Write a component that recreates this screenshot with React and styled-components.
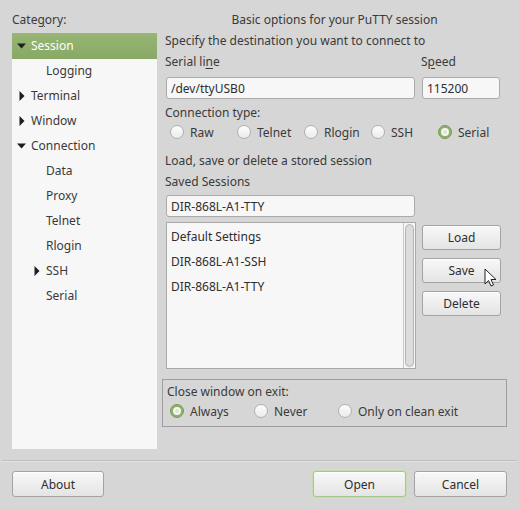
import React, { useState } from 'react';
import styled, { createGlobalStyle, css } from 'styled-components';

const GlobalStyle = createGlobalStyle`
  html, body {
    margin: 0;
    padding: 0;
    background: #d6d6d6;
  }
  body {
    font-family: "Noto Sans", "Open Sans", sans-serif;
    font-size: 12px;
    color: #3a3a3a;
  }
`;

const Window = styled.div`
  width: 519px;
  height: 510px;
  display: flex;
  flex-direction: column;
  background: #d6d6d6;
  overflow: hidden;
`;

const Main = styled.div`
  display: flex;
  padding: 12px 12px 0 12px;
  gap: 5px;
`;

const LeftCol = styled.div`
  width: 145px;
  display: flex;
  flex-direction: column;
`;

const Label = styled.div`
  height: 16px;
  line-height: 16px;
  white-space: nowrap;
`;

const U = styled.span`
  text-decoration: underline;
  text-underline-offset: 2px;
`;

const Tree = styled.div`
  margin-top: 5px;
  height: 416px;
  background: #f7f7f7;
  border-top: 1px solid #a8a8a8;
  box-sizing: border-box;
`;

const TreeRow = styled.div`
  height: 25px;
  box-sizing: border-box;
  padding-bottom: 2px;
  display: flex;
  align-items: center;
  padding-left: ${p => p.$level * 15}px;
  color: ${p => (p.$selected ? '#ffffff' : '#3a3a3a')};
  background: ${p =>
    p.$selected ? 'linear-gradient(#96b573, #88a966)' : 'transparent'};
  white-space: nowrap;
`;

const Expander = styled.span`
  width: 19px;
  display: flex;
  justify-content: center;
  align-items: center;
  flex: none;
`;

const Arrow = ({ open }) =>
  open ? (
    <svg width="9" height="6" viewBox="0 0 9 6">
      <path d="M0 0.5 L9 0.5 L4.5 5.5 Z" fill="#1e1e1e" />
    </svg>
  ) : (
    <svg width="6" height="10" viewBox="0 0 6 10">
      <path d="M0.5 0 L5.5 5 L0.5 10 Z" fill="#1e1e1e" />
    </svg>
  );

const RightCol = styled.div`
  width: 345px;
  display: flex;
  flex-direction: column;
`;

const Title = styled(Label)`
  text-align: center;
`;

const Inner = styled.div`
  padding-left: 3px;
  display: flex;
  flex-direction: column;
`;

const Spaced = styled(Label)`
  margin-top: ${p => p.$top || 0}px;
`;

const TwoCol = styled.div`
  display: grid;
  grid-template-columns: 250px 80px;
  column-gap: 6px;
  margin-top: ${p => p.$top || 0}px;
`;

const Field = styled.div`
  display: flex;
  flex-direction: column;
`;

const Input = styled.input`
  box-sizing: border-box;
  height: 22px;
  margin: ${p => p.$top ?? 7}px 0 0 1px;
  width: ${p => p.$width}px;
  border: 1px solid #ababab;
  border-radius: 3px;
  background: #f7f7f7;
  font: inherit;
  color: #2e2e2e;
  padding: 0 4px;
  outline: none;
`;

const RadioRow = styled.div`
  display: flex;
  height: 16px;
  align-items: center;
  margin-top: ${p => p.$top}px;
  padding-left: ${p => p.$indent}px;
`;

const RadioItem = styled.label`
  display: flex;
  align-items: center;
  width: ${p => p.$width}px;
  flex: none;
  white-space: nowrap;
  gap: 6px;
`;

const Circle = styled.span`
  width: 14px;
  height: 14px;
  box-sizing: border-box;
  border-radius: 50%;
  flex: none;
  display: flex;
  align-items: center;
  justify-content: center;
  ${p =>
    p.$on
      ? css`
          background: #8fb06c;
          border: 1px solid #7b9c58;
          &::after {
            content: '';
            width: 8px;
            height: 8px;
            box-sizing: border-box;
            border-radius: 50%;
            background: #d9e6cc;
            border: 2px solid #f4f7f0;
          }
        `
      : css`
          background: linear-gradient(#fdfdfd, #ebebeb);
          border: 1px solid #b0b0b0;
        `}
`;

const Radio = ({ on, label, width, onSelect }) => (
  <RadioItem $width={width} onClick={onSelect}>
    <Circle $on={on} />
    {label}
  </RadioItem>
);

const SessionsGrid = styled.div`
  display: grid;
  grid-template-columns: 250px 80px;
  column-gap: 6px;
  margin-top: 5px;
  padding-left: 1px;
`;

const ListBox = styled.div`
  box-sizing: border-box;
  height: 147px;
  border: 1px solid #a9a9a9;
  background: #f7f7f7;
  display: flex;
`;

const ListItems = styled.div`
  flex: 1;
  padding: 1px 4px 0;
`;

const ListItem = styled.div`
  height: 25px;
  line-height: 25px;
  color: #2e2e2e;
`;

const ScrollTrack = styled.div`
  width: 12px;
  border-left: 1px solid #c8c8c8;
  display: flex;
  padding: 1px 0;
  box-sizing: border-box;
`;

const ScrollThumb = styled.div`
  flex: 1;
  margin: 0 1px;
  border: 1px solid #b4b4b4;
  border-radius: 5px;
  background: #dcdcdc;
`;

const ButtonStack = styled.div`
  display: flex;
  flex-direction: column;
  gap: 8px;
  padding-top: 3px;
`;

const Button = styled.button`
  box-sizing: border-box;
  width: ${p => p.$width || 80}px;
  height: ${p => p.$height || 25}px;
  border: 1px solid ${p => (p.$focus ? '#a7c78a' : '#a3a3a3')};
  box-shadow: ${p =>
    p.$focus ? '0 0 0 1px #c6dcb1, inset 0 1px 0 #fff' : 'inset 0 1px 0 #fff'};
  border-radius: 3px;
  background: linear-gradient(#f8f8f8, #e4e4e4);
  font: inherit;
  color: #2e2e2e;
  padding: 0;
  cursor: default;
`;

const GroupBox = styled.fieldset`
  margin: 10px 0 0 0;
  padding: 4px 0 0 0;
  height: 48px;
  box-sizing: border-box;
  border: 1px solid #9e9e9e;
  display: flex;
  flex-direction: column;
`;

const GroupLabel = styled(Label)`
  padding-left: 4px;
`;

const Separator = styled.div`
  margin: 11px 2px 0;
  height: 1px;
  background: #bdbdbd;
  border-bottom: 1px solid #e4e4e4;
`;

const Footer = styled.div`
  display: flex;
  padding: 9px 12px 0;
  align-items: center;
`;

const FooterRight = styled.div`
  margin-left: auto;
  display: flex;
  gap: 8px;
`;

const Cursor = styled.svg`
  position: absolute;
  left: 484px;
  top: 268px;
  pointer-events: none;
`;

const tree = [
  { label: 'Session', level: 0, arrow: 'open', selected: true },
  { label: 'Logging', level: 1 },
  { label: 'Terminal', level: 0, arrow: 'closed' },
  { label: 'Window', level: 0, arrow: 'closed' },
  { label: 'Connection', level: 0, arrow: 'open' },
  { label: 'Data', level: 1 },
  { label: 'Proxy', level: 1 },
  { label: 'Telnet', level: 1 },
  { label: 'Rlogin', level: 1 },
  { label: 'SSH', level: 1, arrow: 'closed' },
  { label: 'Serial', level: 1 },
];

const connTypes = [
  ['Raw', 67],
  ['Telnet', 67],
  ['Rlogin', 67],
  ['SSH', 67],
  ['Serial', 60],
];

const closeOpts = [
  ['Always', 84],
  ['Never', 84],
  ['Only on clean exit', 140],
];

export default function App() {
  const [conn, setConn] = useState('Serial');
  const [close, setClose] = useState('Always');

  return (
    <Window>
      <GlobalStyle />
      <Main>
        <LeftCol>
          <Label>
            Cate<U>g</U>ory:
          </Label>
          <Tree>
            {tree.map(t => (
              <TreeRow key={t.label} $level={t.level} $selected={t.selected}>
                <Expander>{t.arrow && <Arrow open={t.arrow === 'open'} />}</Expander>
                {t.label}
              </TreeRow>
            ))}
          </Tree>
        </LeftCol>

        <RightCol>
          <Title>Basic options for your PuTTY session</Title>
          <Inner>
            <Spaced $top={5}>Specify the destination you want to connect to</Spaced>
            <TwoCol $top={5}>
              <Field>
                <Label>
                  Serial li<U>n</U>e
                </Label>
                <Input $width={249} defaultValue="/dev/ttyUSB0" />
              </Field>
              <Field>
                <Label>
                  S<U>p</U>eed
                </Label>
                <Input $width={78} defaultValue="115200" />
              </Field>
            </TwoCol>
            <Spaced $top={6}>Connection type:</Spaced>
            <RadioRow $top={3} $indent={5}>
              {connTypes.map(([name, w]) => (
                <Radio
                  key={name}
                  label={name}
                  width={w}
                  on={conn === name}
                  onSelect={() => setConn(name)}
                />
              ))}
            </RadioRow>
            <Spaced $top={13}>Load, save or delete a stored session</Spaced>
            <Spaced $top={5}>Saved Sessions</Spaced>
            <Input $width={249} $top={5} defaultValue="DIR-868L-A1-TTY" />
            <SessionsGrid>
              <ListBox>
                <ListItems>
                  <ListItem>Default Settings</ListItem>
                  <ListItem>DIR-868L-A1-SSH</ListItem>
                  <ListItem>DIR-868L-A1-TTY</ListItem>
                </ListItems>
                <ScrollTrack>
                  <ScrollThumb />
                </ScrollTrack>
              </ListBox>
              <ButtonStack>
                <Button $width={79}>Load</Button>
                <Button $width={79}>Save</Button>
                <Button $width={79}>Delete</Button>
              </ButtonStack>
            </SessionsGrid>
          </Inner>
          <GroupBox>
            <GroupLabel>Close window on exit:</GroupLabel>
            <RadioRow $top={3} $indent={7}>
              {closeOpts.map(([name, w]) => (
                <Radio
                  key={name}
                  label={name}
                  width={w}
                  on={close === name}
                  onSelect={() => setClose(name)}
                />
              ))}
            </RadioRow>
          </GroupBox>
        </RightCol>
      </Main>
      <Separator />
      <Footer>
        <Button $width={92} $height={26}>About</Button>
        <FooterRight>
          <Button $width={93} $height={26} $focus>Open</Button>
          <Button $width={93} $height={26}>Cancel</Button>
        </FooterRight>
      </Footer>
      <Cursor width="14" height="20" viewBox="0 0 14 20">
        <path d="M1 1 L1 16 L4.5 12.5 L7 18 L9.5 17 L7 11.5 L12 11.5 Z" fill="#fff" stroke="#222" strokeWidth="1" strokeLinejoin="round" />
      </Cursor>
    </Window>
  );
}
